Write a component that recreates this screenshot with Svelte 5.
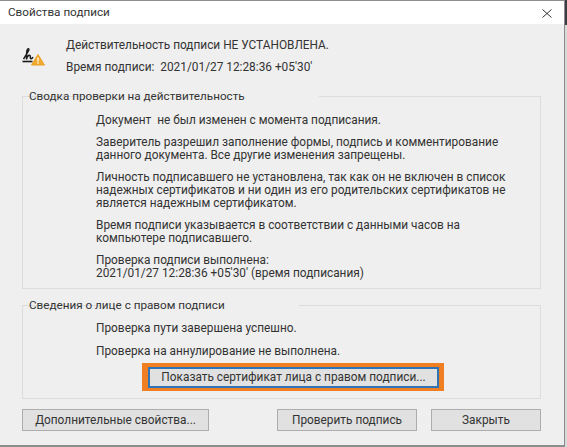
<script>
  const summary = [
    ['Документ  не был изменен с момента подписания.'],
    ['Заверитель разрешил заполнение формы, подпись и комментирование', 'данного документа. Все другие изменения запрещены.'],
    ['Личность подписавшего не установлена, так как он не включен в список', 'надежных сертификатов и ни один из его родительских сертификатов не', 'является надежным сертификатом.'],
    ['Время подписи указывается в соответствии с данными часов на', 'компьютере подписавшего.'],
    ['Проверка подписи выполнена:', "2021/01/27 12:28:36 +05'30' (время подписания)"]
  ];
  const signer = [['Проверка пути завершена успешно.'], ['Проверка на аннулирование не выполнена.']];
</script>

{#snippet paras(list)}
  {#each list as lines}
    <p>{#each lines as line}<span>{line}</span>{/each}</p>
  {/each}
{/snippet}

<div class="screen">
  <div class="dialog">
    <header class="title">
      <span>Свойства подписи</span>
      <svg class="close" width="10" height="9" viewBox="0 0 10 9"><path d="M.5.5l9 8M9.500.5l-9 8" stroke="#333" fill="none"/></svg>
    </header>
    <main class="body">
      <section class="status">
        <svg class="sig" width="24" height="20" viewBox="0 0 24 20">
          <path d="M1.500 12C3 9.500 6 5 6.800 3C7.300 1.200 5.500 1.200 5 3.500C4.500 6 4.500 10 4.500 12.500C5 9.500 7 7.500 8 8.500C8.800 9.500 7.800 11.800 9 11.800C10 11.800 10.500 11 11 10" fill="none" stroke="#1a1a1a" stroke-width="1.500"/>
          <path d="M.5 14.500h10" stroke="#1a1a1a" stroke-width="1.600"/>
          <path d="M16 7.500L22.500 18H9.500Z" fill="#f0a92c" stroke="#eda128" stroke-linejoin="round"/>
          <path d="M16 10.500v4M16 15.300v1.500" stroke="#fff" stroke-width="1.300"/>
        </svg>
        <div class="status-text">
          <p>Действительность подписи НЕ УСТАНОВЛЕНА.</p>
          <p class="time">Время подписи:&nbsp; 2021/01/27 12:28:36 +05'30'</p>
        </div>
      </section>
      <fieldset class="first">
        <legend>Сводка проверки на действительность</legend>
        {@render paras(summary)}
      </fieldset>
      <fieldset class="second">
        <legend>Сведения о лице с правом подписи</legend>
        {@render paras(signer)}
        <div class="cert-wrap"><button class="cert">Показать сертификат лица с правом подписи...</button></div>
      </fieldset>
      <footer>
        <button class="more">Дополнительные свойства...</button>
        <button class="check">Проверить подпись</button>
        <button class="shut">Закрыть</button>
      </footer>
    </main>
  </div>
  <div class="outside"><div class="dark"></div></div>
</div>

<style>
  :global(body) { margin: 0; background: #d9d9d9; }
  .screen { display: flex; width: 567px; height: 447px; overflow: hidden; font-family: "Roboto", "Noto Sans", sans-serif; font-size: 11.85px; line-height: 13px; color: #333; }
  .dialog { width: 565px; height: 447px; box-sizing: border-box; border-top: 1px solid #8e8e8e; border-right: 1px solid #8a8a8a; border-bottom: 2px solid #8e8e8e; display: flex; flex-direction: column; flex: none; }
  .title { height: 23px; flex: none; background: #fff; display: flex; align-items: center; justify-content: space-between; padding: 0 12px 0 8px; font-size: 11.7px; }
  .close { margin-top: 1px; }
  .body { flex: 1; background: #efefef; padding: 0 22px; display: flex; flex-direction: column; }
  .status { display: flex; height: 66px; flex: none; padding-top: 15px; box-sizing: border-box; }
  .sig { margin-top: 8px; margin-right: 20px; flex: none; }
  p { margin: 0; }
  .time { margin-top: 9px; }
  fieldset { margin: 0; min-width: 0; border: 1px solid #dcdcdc; padding: 0 0 0 73px; width: 519px; box-sizing: border-box; flex: none; }
  legend { margin-left: 5px; padding: 0 1px; position: relative; left: -73px; font-size: 11.7px; }
  .first { height: 199px; padding-top: 11px; }
  .second { height: 100px; margin-top: 10px; padding-top: 10px; }
  fieldset p { margin-bottom: 9px; }
  .second p { margin-bottom: 10px; }
  fieldset p span { display: block; white-space: pre; }
  .cert-wrap { margin: -5px 0 0 46px; width: 302px; height: 28px; box-sizing: border-box; background: #f07f23; padding: 4px 5px 3px 6px; }
  button { font: inherit; color: inherit; background: #e1e1e1; border: 1px solid #adadad; border-radius: 0; padding: 0; height: 22px; display: block; }
  .cert { width: 100%; height: 21px; border: 2px solid #2f75b5; }
  footer { display: flex; margin-top: 10px; }
  .more { width: 187px; }
  .check { width: 140px; margin-left: 68px; }
  .shut { width: 110px; margin-left: 14px; }
  .outside { flex: 1; }
  .dark { height: 25px; background: #3a3f45; }
</style>
